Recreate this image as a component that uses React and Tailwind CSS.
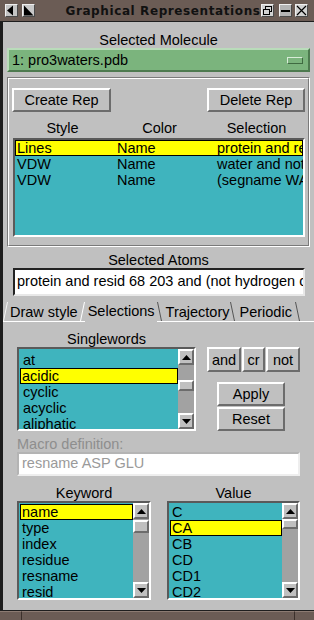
import React from 'react';

const raised = "border-2 border-t-white border-l-white border-b-[#6c6c6c] border-r-[#6c6c6c]";
const sunken = "border-2 border-t-[#5a5a5a] border-l-[#5a5a5a] border-b-white border-r-white";
const teal = "bg-[#3fb4be]";

const TitleBtn = ({ children, className = "" }) => (
  <div className={`w-[13px] h-[13px] flex items-center justify-center border border-t-[#f0f0f0] border-l-[#f0f0f0] border-b-[#4a4a4a] border-r-[#4a4a4a] ${className}`}>
    {children}
  </div>
);

const TitleBar = () => (
  <div className="h-[22px] bg-[#6b5c55] border-b border-b-[#1e1e1e] flex items-center pl-[5px] pr-[6px]">
    <TitleBtn className="bg-[#c4c4c4]">
      <svg width="11" height="11" viewBox="0 0 11 11"><polygon points="1,5.5 7,0.5 7,10.5" fill="#000" /></svg>
    </TitleBtn>
    <TitleBtn className="bg-[#c8c8c8] ml-[4px]">
      <svg width="11" height="11" viewBox="0 0 11 11"><polygon points="1,0.5 1,10.5 10.5,10.5" fill="#000" /></svg>
    </TitleBtn>
    <div className="flex-1 text-center pl-[30px] font-['DejaVu_Sans',sans-serif] font-bold text-[12px] tracking-[0.6px] text-[#111] leading-[16px]">
      Graphical Representations
    </div>
    <TitleBtn className="bg-[#d2d2d2]">
      <svg width="11" height="11" viewBox="0 0 11 11">
        <rect x="3.5" y="1.5" width="6" height="5" fill="none" stroke="#000" />
        <rect x="1.5" y="4.5" width="6" height="5" fill="#d2d2d2" stroke="#000" />
      </svg>
    </TitleBtn>
    <TitleBtn className="bg-[#b4b4b4] ml-[5px]">
      <svg width="11" height="11" viewBox="0 0 11 11"><rect x="1" y="5" width="9" height="2" fill="#000" /></svg>
    </TitleBtn>
    <TitleBtn className="bg-[#d2d2d2] ml-[3px]">
      <svg width="11" height="11" viewBox="0 0 11 11">
        <path d="M1 1 L10 10 M10 1 L1 10" stroke="#000" strokeWidth="1.2" />
      </svg>
    </TitleBtn>
  </div>
);

const TkButton = ({ children, className = "" }) => (
  <div className={`${raised} bg-[#c0c0c0] flex items-center justify-center leading-[16px] ${className}`}>
    {children}
  </div>
);

const Arrow = ({ up }) => (
  <div className={`${raised} h-[16px] bg-[#c0c0c0] flex items-center justify-center`}>
    <svg width="9" height="5" viewBox="0 0 9 5">
      <polygon points={up ? "0,5 4.5,0 9,5" : "0,0 4.5,5 9,0"} fill="#000" />
    </svg>
  </div>
);

const Scrollbar = ({ gap, thumb }) => (
  <div className="w-[16px] shrink-0 flex flex-col bg-[#a2a2a2]">
    <Arrow up />
    <div className={gap} />
    <div className={`${raised} bg-[#c0c0c0] ${thumb}`} />
    <div className="flex-1" />
    <Arrow />
  </div>
);

const Item = ({ text, sel, pad }) =>
  sel ? (
    <div className="h-[16px] leading-[14px] ml-[1px] bg-[#ffff00] border border-black pl-[1px] whitespace-nowrap">{text}</div>
  ) : (
    <div className={`h-[16px] leading-[16px] whitespace-nowrap ${pad}`}>{text}</div>
  );

const Tab = ({ children, className = "" }) => (
  <div className={`h-[26px] pt-[8px] leading-[16px] whitespace-nowrap ${className}`}>{children}</div>
);

const Slant = ({ dir, color, line = true }) => (
  <div className={`h-[26px] w-[5px] shrink-0 ${line ? "border-b border-b-white" : ""}`}>
    <svg width="5" height="25" viewBox="0 0 5 25">
      {dir === "/" ? (
        <line x1="0.5" y1="25" x2="4.5" y2="6" stroke={color} />
      ) : (
        <line x1="0.5" y1="6" x2="4.5" y2="25" stroke={color} />
      )}
    </svg>
  </div>
);

const reps = [
  ["Lines", "Name", "protein and resid 68 203"],
  ["VDW", "Name", "water and not within 5"],
  ["VDW", "Name", "(segname WAT)"],
];

export default function App() {
  return (
    <div className="w-[314px] h-[620px] flex flex-col bg-[#c0c0c0] overflow-hidden text-black text-[14.5px] font-['Liberation_Sans',sans-serif]">
      <TitleBar />

      <div className="flex-1 min-h-0 flex flex-col border-l-[3px] border-l-[#1c1c1c]">
        <div className="h-[26px] pt-[10px] leading-[16px] text-center">Selected Molecule</div>
        <div className="mx-[4px] h-[24px] bg-[#7bb47d] border-2 border-t-[#b9dcba] border-l-[#b9dcba] border-b-[#4d7a4f] border-r-[#4d7a4f] flex items-center pl-[3px] pr-[5px]">
          <span className="flex-1 leading-[16px]">1: pro3waters.pdb</span>
          <div className="w-[16px] h-[7px] border border-t-[#d8ecd8] border-l-[#d8ecd8] border-b-[#3f6a41] border-r-[#3f6a41]" />
        </div>

        <div className="mt-[5px] mx-[4px] h-[170px] border border-t-[#7a7a7a] border-l-[#7a7a7a] border-b-white border-r-white">
          <div className="h-full flex flex-col border border-t-white border-l-white border-b-[#7a7a7a] border-r-[#7a7a7a] pt-[9px] px-[3px]">
            <div className="flex justify-between">
              <TkButton className="w-[99px] h-[24px]">Create Rep</TkButton>
              <TkButton className="w-[98px] h-[24px]">Delete Rep</TkButton>
            </div>
            <div className="mt-[8px] flex pl-[2px] leading-[16px]">
              <div className="w-[100px] text-center">Style</div>
              <div className="w-[100px] text-center">Color</div>
              <div className="w-[100px] text-center">Selection</div>
            </div>
            <div className={`mt-[2px] ml-[1px] h-[99px] ${sunken} ${teal} overflow-hidden`}>
              {reps.map((r, i) => (
                <div
                  key={i}
                  className={
                    i === 0
                      ? "h-[16px] leading-[14px] flex bg-[#ffff00] border border-black pl-[1px] whitespace-nowrap overflow-hidden"
                      : "h-[16px] leading-[16px] flex pl-[2px] whitespace-nowrap overflow-hidden"
                  }
                >
                  <div className="w-[100px] shrink-0">{r[0]}</div>
                  <div className="w-[100px] shrink-0">{r[1]}</div>
                  <div className="shrink-0">{r[2]}</div>
                </div>
              ))}
            </div>
          </div>
        </div>

        <div className="mt-[5px] leading-[16px] text-center">Selected Atoms</div>
        <div className="ml-[10px] mr-[9px] h-[28px] bg-white border-2 border-t-[#222] border-l-[#222] border-b-[#e8e8e8] border-r-[#e8e8e8] flex items-center pl-[2px] overflow-hidden whitespace-nowrap">
          protein and resid 68 203 and (not hydrogen or name CA)
        </div>

        <div className="flex h-[26px]">
          <Slant dir="/" color="#f4f4f4" />
          <Tab className="pl-[2px] pr-[2px] border-b border-b-white">Draw style</Tab>
          <Slant dir="/" color="#ffffff" />
          <Tab className="pl-[3px] pr-[2px] -mt-[1px]">Selections</Tab>
          <Slant dir="\" color="#555555" />
          <Tab className="pl-[4px] border-b border-b-white">Trajectory</Tab>
          <Slant dir="\" color="#555555" />
          <Tab className="pl-[5px] pr-[3px] border-b border-b-white">Periodic</Tab>
          <Slant dir="\" color="#555555" />
          <div className="flex-1 border-b border-b-white" />
        </div>

        <div className="flex-1 flex flex-col pl-[14px] pt-[9px]">
          <div className="flex">
            <div className="flex flex-col">
              <div className="w-[179px] leading-[16px] text-center">Singlewords</div>
              <div className={`w-[179px] h-[84px] flex ${sunken} ${teal} overflow-hidden`}>
                <div className="flex-1 overflow-hidden">
                  <div className="-mt-[13px]">
                    <Item text="coil" pad="pl-[4px]" />
                    <Item text="at" pad="pl-[4px]" />
                    <Item text="acidic" sel />
                    <Item text="cyclic" pad="pl-[4px]" />
                    <Item text="acyclic" pad="pl-[4px]" />
                    <Item text="aliphatic" pad="pl-[4px]" />
                  </div>
                </div>
                <Scrollbar gap="h-[15px]" thumb="h-[11px]" />
              </div>
            </div>
            <div className="ml-[11px] mt-[16px] flex flex-col">
              <div className="flex gap-[1px]">
                <TkButton className="w-[34px] h-[25px]">and</TkButton>
                <TkButton className="w-[23px] h-[25px]">cr</TkButton>
                <TkButton className="w-[34px] h-[25px]">not</TkButton>
              </div>
              <TkButton className="ml-[10px] mt-[10px] w-[68px] h-[24px]">Apply</TkButton>
              <TkButton className="ml-[10px] mt-[1px] w-[68px] h-[24px]">Reset</TkButton>
            </div>
          </div>

          <div className="mt-[5px] leading-[16px] text-[#8e8e8e]">Macro definition:</div>
          <div className="w-[283px] h-[24px] bg-white border-2 border-t-[#b4b4b4] border-l-[#b4b4b4] border-b-[#eeeeee] border-r-[#eeeeee] flex items-center pl-[3px] text-[#9a9a9a] whitespace-nowrap">
            resname ASP GLU
          </div>

          <div className="mt-[9px] flex">
            <div className="flex flex-col">
              <div className="w-[134px] leading-[16px] text-center">Keyword</div>
              <div className={`w-[134px] h-[99px] flex ${sunken} ${teal} overflow-hidden`}>
                <div className="flex-1 overflow-hidden pt-[1px]">
                  <Item text="name" sel />
                  <Item text="type" pad="pl-[3px]" />
                  <Item text="index" pad="pl-[3px]" />
                  <Item text="residue" pad="pl-[3px]" />
                  <Item text="resname" pad="pl-[3px]" />
                  <Item text="resid" pad="pl-[3px]" />
                </div>
                <Scrollbar gap="h-[1px]" thumb="h-[13px]" />
              </div>
            </div>
            <div className="ml-[16px] flex flex-col">
              <div className="w-[133px] leading-[16px] text-center">Value</div>
              <div className={`w-[133px] h-[99px] flex ${sunken} ${teal} overflow-hidden`}>
                <div className="flex-1 overflow-hidden pt-[1px]">
                  <Item text="C" pad="pl-[3px]" />
                  <Item text="CA" sel />
                  <Item text="CB" pad="pl-[3px]" />
                  <Item text="CD" pad="pl-[3px]" />
                  <Item text="CD1" pad="pl-[3px]" />
                  <Item text="CD2" pad="pl-[3px]" />
                </div>
                <Scrollbar gap="h-[0px]" thumb="h-[10px]" />
              </div>
            </div>
          </div>
        </div>
      </div>

      <div className="h-[10px] flex bg-[#6b5c55] border-t border-t-[#1e1e1e]">
        <div className="w-[22px] border-t border-t-[#8c7b72] border-r border-r-[#3b302b]" />
        <div className="flex-1 border-t border-t-[#8c7b72] border-r border-r-[#3b302b]" />
        <div className="w-[19px] border-t border-t-[#8c7b72]" />
      </div>
    </div>
  );
}
